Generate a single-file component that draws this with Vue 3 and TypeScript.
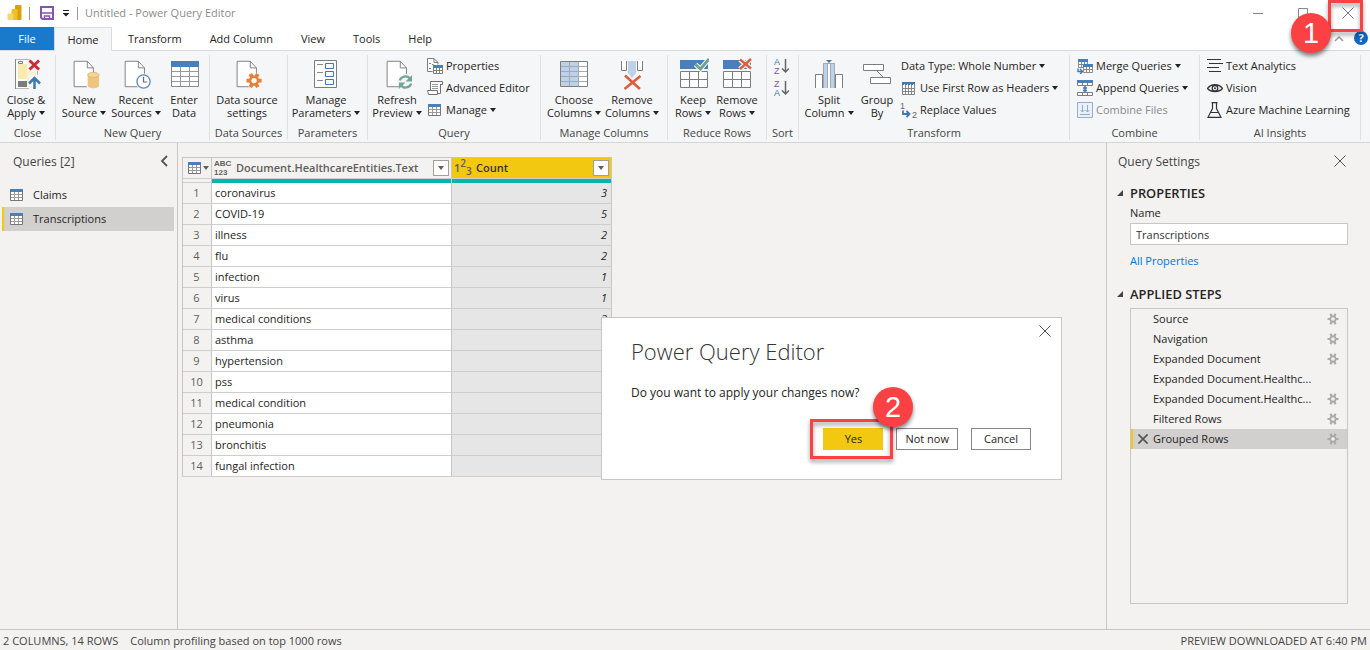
<script setup lang="ts">
import { ref } from 'vue'

interface RibbonButton {
  icon?: string
  label: string
  second?: string
  menu?: boolean
  disabled?: boolean
  action?: string
  letters?: [string, string]
}

interface RibbonGroup {
  name: string
  caption: string
  large: RibbonButton[]
  small: RibbonButton[]
}

const tabs = ['Home', 'Transform', 'Add Column', 'View', 'Tools', 'Help']
const activeTab = ref('Home')

const groups: RibbonGroup[] = [
  {
    name: 'close',
    caption: 'Close',
    large: [{ icon: 'apply', label: 'Close &', second: 'Apply', menu: true }],
    small: [],
  },
  {
    name: 'new-query',
    caption: 'New Query',
    large: [
      { icon: 'new-source', label: 'New', second: 'Source', menu: true },
      { icon: 'recent', label: 'Recent', second: 'Sources', menu: true },
      { icon: 'enter-data', label: 'Enter', second: 'Data' },
    ],
    small: [],
  },
  {
    name: 'sources',
    caption: 'Data Sources',
    large: [{ icon: 'source-settings', label: 'Data source', second: 'settings' }],
    small: [],
  },
  {
    name: 'parameters',
    caption: 'Parameters',
    large: [{ icon: 'parameters', label: 'Manage', second: 'Parameters', menu: true }],
    small: [],
  },
  {
    name: 'query-group',
    caption: 'Query',
    large: [{ icon: 'refresh', label: 'Refresh', second: 'Preview', menu: true }],
    small: [
      { icon: 'properties', label: 'Properties' },
      { icon: 'editor', label: 'Advanced Editor' },
      { icon: 'table', label: 'Manage', menu: true },
    ],
  },
  {
    name: 'columns',
    caption: 'Manage Columns',
    large: [
      { icon: 'choose-columns', label: 'Choose', second: 'Columns', menu: true },
      { icon: 'remove-columns', label: 'Remove', second: 'Columns', menu: true },
    ],
    small: [],
  },
  {
    name: 'rows',
    caption: 'Reduce Rows',
    large: [
      { icon: 'keep-rows', label: 'Keep', second: 'Rows', menu: true },
      { icon: 'remove-rows', label: 'Remove', second: 'Rows', menu: true },
    ],
    small: [],
  },
  {
    name: 'sort',
    caption: 'Sort',
    large: [],
    small: [
      { icon: 'sort-arrow', label: '', action: 'Sort ascending', letters: ['A', 'Z'] },
      { icon: 'sort-arrow', label: '', action: 'Sort descending', letters: ['Z', 'A'] },
    ],
  },
  {
    name: 'transform',
    caption: 'Transform',
    large: [
      { icon: 'split', label: 'Split', second: 'Column', menu: true },
      { icon: 'group', label: 'Group', second: 'By' },
    ],
    small: [
      { label: 'Data Type: Whole Number', menu: true },
      { icon: 'headers', label: 'Use First Row as Headers', menu: true },
      { icon: 'replace', label: 'Replace Values', letters: ['1', '2'] },
    ],
  },
  {
    name: 'combine',
    caption: 'Combine',
    large: [],
    small: [
      { icon: 'merge', label: 'Merge Queries', menu: true },
      { icon: 'append', label: 'Append Queries', menu: true },
      { icon: 'combine', label: 'Combine Files', disabled: true },
    ],
  },
  {
    name: 'insights',
    caption: 'AI Insights',
    large: [],
    small: [
      { icon: 'text', label: 'Text Analytics' },
      { icon: 'vision', label: 'Vision' },
      { icon: 'flask', label: 'Azure Machine Learning' },
    ],
  },
]

const queries = ['Claims', 'Transcriptions']
const selectedQuery = ref('Transcriptions')
const queryName = ref('Transcriptions')

const rows: { text: string; count: number }[] = [
  { text: 'coronavirus', count: 3 },
  { text: 'COVID-19', count: 5 },
  { text: 'illness', count: 2 },
  { text: 'flu', count: 2 },
  { text: 'infection', count: 1 },
  { text: 'virus', count: 1 },
  { text: 'medical conditions', count: 2 },
  { text: 'asthma', count: 1 },
  { text: 'hypertension', count: 1 },
  { text: 'pss', count: 1 },
  { text: 'medical condition', count: 1 },
  { text: 'pneumonia', count: 1 },
  { text: 'bronchitis', count: 1 },
  { text: 'fungal infection', count: 1 },
]

const steps: { label: string; gear: boolean }[] = [
  { label: 'Source', gear: true },
  { label: 'Navigation', gear: true },
  { label: 'Expanded Document', gear: true },
  { label: 'Expanded Document.Healthc...', gear: false },
  { label: 'Expanded Document.Healthc...', gear: true },
  { label: 'Filtered Rows', gear: true },
  { label: 'Grouped Rows', gear: true },
]
const selectedStep = ref(6)
</script>

<template>
  <svg class="sprite" aria-hidden="true">
    <symbol id="doc" viewBox="0 0 32 32">
      <path d="M6.5 2.5H20.5L27 9.5V29.5H6.5Z" fill="#fff" stroke="#7d7d7d" />
      <path d="M20.5 2.5V9.5H27" fill="none" stroke="#7d7d7d" />
    </symbol>
    <symbol id="apply" viewBox="0 0 32 32">
      <path d="M5.5 1.5H27.5V30.5H5.5Z" fill="#fff" stroke="#b9b9b9" />
      <path d="M5.5 1V31" stroke="#8a8a8a" />
      <path d="M8 6H17V21H8Z" fill="#fbeab0" />
      <path d="M17 13L26 13V19L17 28Z" fill="#fcf1cb" />
      <path d="M8.5 3.5H12.5V5.5H8.5Z" fill="#fff" stroke="#7d7d7d" />
      <path d="M8 23H17V29H8Z" fill="#7d7d7d" />
      <circle cx="24" cy="7" r="7" fill="#f5f6f7" />
      <path d="M19.5 2.5L29 11.5M29 2.5L19.5 11.5" stroke="#cf2a33" stroke-width="3" />
      <path d="M19 17H31V32H19Z" fill="#f5f6f7" />
      <path d="M24.5 31V20M19 25.5L24.5 20L30 25.5" fill="none" stroke="#3f78b4" stroke-width="2.5" />
    </symbol>
    <symbol id="new-source" viewBox="0 0 34 32">
      <use href="#doc" width="32" height="32" />
      <path d="M20 15H34V32H20Z" fill="#f5f6f7" />
      <path d="M21 17V28.5C21 32 33 32 33 28.5V17Z" fill="#eec57c" />
      <ellipse cx="27" cy="17" rx="6" ry="2.6" fill="#f3d59e" stroke="#e2b364" />
    </symbol>
    <symbol id="recent" viewBox="0 0 34 32">
      <use href="#doc" x="-1" width="32" height="32" />
      <circle cx="25" cy="24" r="8.5" fill="#f5f6f7" />
      <circle cx="25" cy="24" r="7" fill="#fff" stroke="#5d8cc0" stroke-width="1.4" />
      <path d="M25 19V24.5H29" fill="none" stroke="#666" stroke-width="1.3" />
    </symbol>
    <symbol id="enter-data" viewBox="0 0 32 32">
      <path d="M3.5 3.5H30.5V28.5H3.5Z" fill="#fff" stroke="#8a8a8a" />
      <path d="M12.5 9V28M21.5 9V28M4 13.5H30M4 18.5H30M4 23.5H30" stroke="#9a9a9a" />
      <path d="M3 3H31V9H3Z" fill="#4a80b9" />
    </symbol>
    <symbol id="source-settings" viewBox="0 0 34 32">
      <use href="#doc" width="32" height="32" />
      <circle cx="24.5" cy="23" r="8.5" fill="#f5f6f7" />
      <path d="M16.5 23H32.5M20.5 16L28.5 30M28.5 16L20.5 30" stroke="#e58138" stroke-width="4" />
      <circle cx="24.5" cy="23" r="5.5" fill="#e58138" />
      <circle cx="24.5" cy="23" r="2.8" fill="#fff" />
    </symbol>
    <symbol id="parameters" viewBox="0 0 32 32">
      <path d="M4.5 2.5H26.5V29.5H4.5Z" fill="#fff" stroke="#7d7d7d" />
      <path d="M7 6.5H13M7 14.5H13M7 22.5H13" stroke="#8a8a8a" />
      <path d="M15.5 5.5H23.5V10.5H15.5ZM15.5 13.5H23.5V18.5H15.5ZM15.5 21.5H23.5V26.5H15.5Z" fill="#fff" stroke="#3f78b4" />
    </symbol>
    <symbol id="refresh" viewBox="0 0 34 32">
      <use href="#doc" width="32" height="32" />
      <circle cx="26" cy="24.5" r="8.5" fill="#f5f6f7" />
      <path d="M20 23C21 18.5 28 16.5 31 21.5M32 26C31 30.5 24 32.5 21 27.5" fill="none" stroke="#72a793" stroke-width="2.4" />
      <path d="M33 17V24H26ZM19 32V25H26Z" fill="#72a793" />
    </symbol>
    <symbol id="choose-columns" viewBox="0 0 32 32">
      <path d="M2.5 3.5H29.5V28.5H2.5Z" fill="#fff" />
      <path d="M3 4H21V28H3Z" fill="#bdd1e9" />
      <path d="M11.5 4V28M20.5 4V28M3 8.5H29M3 13.5H29M3 18.5H29M3 23.5H29" stroke="#a3a9b1" />
      <path d="M2.5 3.5H29.5V28.5H2.5Z" fill="none" stroke="#7d7d7d" />
    </symbol>
    <symbol id="remove-columns" viewBox="0 0 32 32">
      <path d="M5.5 3V12.5H10.5V3M21.5 3V12.5H26.5V3" fill="#fff" stroke="#7d7d7d" />
      <path d="M12 3H20V15L16 20L12 15Z" fill="#bdd1e9" />
      <path d="M9 17.5L24 31M24.5 18L8.5 31" stroke="#d8603c" stroke-width="2.6" />
    </symbol>
    <symbol id="row-grid" viewBox="0 0 32 32">
      <path d="M3 2H31V11H3Z" fill="#4a80b9" />
      <path d="M3.5 13.5H30.5V29.5H3.5ZM12.5 14V29M21.5 14V29M4 21.5H30" fill="#fff" stroke="#7d7d7d" />
    </symbol>
    <symbol id="keep-rows" viewBox="0 0 32 32">
      <use href="#row-grid" width="32" height="32" />
      <path d="M18.5 6.5L23.5 11L32 1" fill="none" stroke="#f5f6f7" stroke-width="5" />
      <path d="M18.5 6.5L23.5 11L32 1" fill="none" stroke="#6ba38d" stroke-width="2.8" />
    </symbol>
    <symbol id="remove-rows" viewBox="0 0 32 32">
      <use href="#row-grid" x="-1" width="32" height="32" />
      <path d="M19 1.5L30 10.5M30 1L19 11" stroke="#f5f6f7" stroke-width="5" />
      <path d="M19 1.5L30 10.5M30 1L19 11" stroke="#d8603c" stroke-width="2.4" />
    </symbol>
    <symbol id="split" viewBox="0 0 32 32">
      <path d="M2.5 30V16.5H9.5V30M22.5 30V16.5H29.5V30" fill="#fff" stroke="#7d7d7d" />
      <path d="M10 5H14V30H10ZM18 5H22V30H18Z" fill="#bdd1e9" />
      <path d="M14 5H18V30H14Z" fill="#fff" />
      <path d="M10.5 30V5.5H21.5V30M14.5 6V30M17.5 6V30" fill="none" stroke="#a3a9b1" />
      <path d="M13 2H19L16 5Z" fill="#3f78b4" />
    </symbol>
    <symbol id="group" viewBox="0 0 32 32">
      <path d="M2.5 6.5H22.5V12.5H2.5ZM9.5 19.5H29.5V25.5H9.5Z" fill="#fff" stroke="#7d7d7d" />
      <path d="M16 13L22 19" stroke="#7d7d7d" />
    </symbol>

    <symbol id="table" viewBox="0 0 16 16">
      <path d="M1.5 2.5H13.5V13.5H1.5Z" fill="#fff" stroke="#767676" />
      <path d="M5.5 5V13M9.5 5V13M2 7.5H13M2 10.5H13" stroke="#9a9a9a" />
      <path d="M1 2H14V5H1Z" fill="#4a80b9" />
    </symbol>
    <symbol id="properties" viewBox="0 0 16 16">
      <path d="M0.5 0.5H7L11 4.5V13.5H0.5Z" fill="#fff" stroke="#7d7d7d" />
      <path d="M7 0.5V4.5H11M2 5.5H4M5 6.5H7M2 10.5H4" fill="none" stroke="#7d7d7d" />
      <path d="M6 7H16V16H6Z" fill="#fff" stroke="#f5f6f7" />
      <path d="M6.5 8.5H15.5V15.5H6.5ZM9.5 9V15M12.5 9V15M7 12.5H15" fill="none" stroke="#7d7d7d" />
      <path d="M6 7H16V10H6Z" fill="#4a80b9" />
    </symbol>
    <symbol id="editor" viewBox="0 0 16 16">
      <path d="M3.5 10.5V1.5H13.5V13.5H4" fill="#fff" stroke="#707070" />
      <path d="M12 1.5H15.5V4.5H13M0.5 10.5H10.5V14.5H1.5Z" fill="#fff" stroke="#707070" />
      <path d="M5 4.5H11M5 6.5H11M5 8.5H11" stroke="#9a9a9a" />
    </symbol>
    <symbol id="sort-arrow" viewBox="0 0 16 16">
      <path d="M12.5 1V14M9 10.5L12.5 14L16 10.5" fill="none" stroke="#666" stroke-width="1.5" />
    </symbol>
    <symbol id="headers" viewBox="0 0 16 16">
      <path d="M1.5 2.5H13.5V14.5H1.5ZM4.5 5V14M7.5 5V14M10.5 5V14M2 8.5H13M2 11.5H13" fill="#fff" stroke="#858585" />
      <path d="M1 2H14V5H1Z" fill="#3f78b4" />
      <path d="M3 4.5H4M6 4.5H7M9 4.5H10M12 4.5H13" stroke="#cfe0f2" />
    </symbol>
    <symbol id="replace" viewBox="0 0 16 16">
      <path d="M2 8.5V12H8M5.5 9L8.5 12L5.5 15" fill="none" stroke="#3f78b4" stroke-width="1.8" />
    </symbol>
    <symbol id="merge" viewBox="0 0 16 16">
      <path d="M1.5 2.5H10.5V9.5H1.5ZM4.5 3V9M7.5 3V9M2 6.5H10" fill="#fff" stroke="#8a8a8a" />
      <path d="M1 1H11V4H1Z" fill="#4a80b9" />
      <path d="M6.5 7.5H15.5V14.5H6.5ZM9.5 8V14M12.5 8V14M7 11.5H15" fill="#fff" stroke="#8a8a8a" />
      <path d="M6 6H16V9H6Z" fill="#4a80b9" />
      <path d="M1 10.5V13.5H5M3 11L5.5 13.5L3 16" fill="none" stroke="#3f78b4" stroke-width="1.4" />
    </symbol>
    <symbol id="append" viewBox="0 0 16 16">
      <path d="M0.5 1.5H15.5V5.5H0.5ZM5.5 3V5M10.5 3V5M0.5 12.5H15.5V15.5H0.5ZM5.5 12V15M10.5 12V15" fill="#fff" stroke="#7d7d7d" />
      <path d="M0 0H16V3H0Z" fill="#4a80b9" />
      <path d="M8 6V12M6 8H10M6 10.5H10" stroke="#3f78b4" stroke-width="1.5" />
    </symbol>
    <symbol id="combine" viewBox="0 0 16 16">
      <path d="M0.5 0.5H15.5V15.5H0.5Z" fill="#e9f0f8" stroke="#93aed0" />
      <path d="M3 12.5H13M5.5 3V10M10.5 3V10M3.5 8L5.5 10L7.5 8M8.5 8L10.5 10L12.5 8" fill="none" stroke="#93a9c6" />
    </symbol>
    <symbol id="text" viewBox="0 0 16 16">
      <path d="M0 1.5H14M2 5.5H16M0 9.5H12M2 13.5H14" stroke="#333" />
    </symbol>
    <symbol id="vision" viewBox="0 0 16 16">
      <path d="M0.5 8.5C4 3.5 12 3.5 15.5 8.5C12 12.5 4 12.5 0.5 8.5Z" fill="none" stroke="#333" stroke-width="1.3" />
      <circle cx="8" cy="8.3" r="2.8" fill="none" stroke="#333" stroke-width="1.3" />
      <circle cx="8" cy="8.3" r="1" fill="#333" />
    </symbol>
    <symbol id="flask" viewBox="0 0 16 16">
      <path d="M4.5 0.7H10.5M5.5 1V6.5L1 15.3H14L9.5 6.5V1M4 10.5H11" fill="none" stroke="#333" stroke-width="1.2" />
    </symbol>
    <symbol id="gear" viewBox="0 0 12 12">
      <path d="M0.5 6H11.5M3.5 0.8L8.5 11.200M8.500 0.8L3.5 11.200" stroke="#acaaa8" stroke-width="2.2" />
      <circle cx="6" cy="6" r="3.5" fill="#acaaa8" />
      <circle cx="6" cy="6" r="1.8" fill="#f3f2f1" />
    </symbol>
    <symbol id="cross" viewBox="0 0 12 12">
      <path d="M0.5 0.5L11.5 11.5M11.5 0.5L0.5 11.5" fill="none" stroke="currentColor" />
    </symbol>
  </svg>

  <div class="window">
    <header class="titlebar">
      <svg class="logo" viewBox="0 0 16 18" aria-hidden="true">
        <path d="M8 1.5Q8 1 9 1H13.5Q14.500 1 14.5 2V15Q14.5 16 13.5 16H8Z" fill="#dba106" />
        <path d="M4.5 6Q4.5 5 5.5 5H9.5Q10.5 5 10.5 6V16H4.5Z" fill="#ecc02b" />
        <path d="M0.5 10.5Q0.5 9.5 1.5 9.5H5.5Q6.5 9.5 6.5 10.5V16H1.5Q0.5 16 0.5 15Z" fill="#f6d75f" />
      </svg>
      <span class="bar"></span>
      <button class="plain save" type="button" aria-label="Save">
        <svg viewBox="0 0 14 14">
          <path d="M1 1H13V13H2.5L1 11.5Z" fill="#fff" stroke="#8753ad" stroke-width="2" />
          <path d="M2 7H12M4.5 14V10H9.5V14" fill="none" stroke="#8753ad" stroke-width="1.5" />
        </svg>
      </button>
      <button class="plain quick" type="button" aria-label="Customize quick access toolbar">
        <svg viewBox="0 0 8 8"><path d="M1 1.5H7" stroke="#222" /><path d="M0.5 4H7.5L4 7.5Z" fill="#222" /></svg>
      </button>
      <span class="bar"></span>
      <h1 class="title">Untitled - Power Query Editor</h1>
      <div class="controls">
        <button class="plain control" type="button" aria-label="Minimize">
          <svg viewBox="0 0 12 12"><path d="M1 6.5H11" stroke="#888" /></svg>
        </button>
        <button class="plain control" type="button" aria-label="Maximize">
          <svg viewBox="0 0 12 12"><path d="M1.5 1.5H10.5V10.5H1.5Z" fill="none" stroke="#888" /></svg>
        </button>
        <button class="plain control" type="button" aria-label="Close">
          <svg viewBox="0 0 12 12"><use href="#cross" /></svg>
        </button>
      </div>
    </header>

    <nav class="tabs">
      <button class="tab file" type="button">File</button>
      <button
        v-for="tab in tabs"
        :key="tab"
        class="tab"
        :class="{ active: tab === activeTab }"
        type="button"
        @click="activeTab = tab"
      >{{ tab }}</button>
      <div class="tab-tools">
        <button class="plain" type="button" aria-label="Collapse ribbon">
          <svg class="caret-up" viewBox="0 0 10 6"><path d="M1 5L5 1L9 5" fill="none" stroke="#999" stroke-width="1.5" /></svg>
        </button>
        <button class="plain help" type="button" aria-label="Help">?</button>
      </div>
    </nav>

    <section class="ribbon">
      <div v-for="group in groups" :key="group.name" class="group" :class="group.name">
        <div class="group-body">
          <button v-for="item in group.large" :key="item.icon" class="large" :class="item.icon" type="button">
            <svg class="icon32" aria-hidden="true"><use :href="'#' + item.icon" /></svg>
            <span>{{ item.label }}</span>
            <span>{{ item.second }}<i v-if="item.menu" class="arrow"></i></span>
          </button>
          <div v-if="group.small.length" class="stack">
            <button
              v-for="(item, i) in group.small"
              :key="i"
              class="small"
              type="button"
              :disabled="item.disabled"
              :aria-label="item.action || item.label"
            >
              <svg v-if="item.icon" class="icon16" aria-hidden="true">
                <use :href="'#' + item.icon" />
                <template v-if="item.letters">
                  <text :x="item.icon === 'replace' ? -1 : 1" y="7" class="letter" :class="'letter-' + item.letters[0]">{{ item.letters[0] }}</text>
                  <text :x="item.icon === 'replace' ? 11 : 1" y="16" class="letter" :class="'letter-' + item.letters[1]">{{ item.letters[1] }}</text>
                </template>
              </svg>
              <span v-if="item.label">{{ item.label }}<i v-if="item.menu" class="arrow"></i></span>
            </button>
          </div>
        </div>
        <div class="caption">{{ group.caption }}</div>
      </div>
    </section>

    <main class="workspace">
      <aside class="queries">
        <header class="pane-head">
          <h2>Queries [2]</h2>
          <button class="plain" type="button" aria-label="Collapse queries">
            <svg class="chevron" viewBox="0 0 8 12"><path d="M7 1L2 6L7 11" fill="none" stroke="#555" stroke-width="1.8" /></svg>
          </button>
        </header>
        <button
          v-for="query in queries"
          :key="query"
          class="query"
          :class="{ selected: query === selectedQuery }"
          type="button"
          @click="selectedQuery = query"
        >
          <svg class="icon16" aria-hidden="true"><use href="#table" /></svg>{{ query }}
        </button>
      </aside>

      <section class="preview">
        <table class="grid">
          <thead>
            <tr class="head">
              <th class="index">
                <div class="head-cell corner">
                  <svg class="icon16" aria-hidden="true"><use href="#table" /></svg><i class="arrow gray"></i>
                </div>
              </th>
              <th class="text-col">
                <div class="head-cell">
                  <span class="any"><b>ABC</b><b>123</b></span>
                  <span class="name">Document.HealthcareEntities.Text</span>
                  <button class="filter" type="button" aria-label="Filter text"><i class="arrow gray"></i></button>
                </div>
              </th>
              <th class="count-col">
                <div class="head-cell">
                  <span class="number">1<sup>2</sup><sub>3</sub></span>
                  <span class="name">Count</span>
                  <button class="filter" type="button" aria-label="Filter count"><i class="arrow gray"></i></button>
                </div>
              </th>
            </tr>
            <tr class="quality"><td></td><td></td><td></td></tr>
          </thead>
          <tbody>
            <tr v-for="(row, i) in rows" :key="row.text">
              <td class="index">{{ i + 1 }}</td>
              <td>{{ row.text }}</td>
              <td class="count">{{ row.count }}</td>
            </tr>
          </tbody>
        </table>
      </section>

      <aside class="settings">
        <header class="pane-head">
          <h2>Query Settings</h2>
          <button class="plain" type="button" aria-label="Close query settings">
            <svg class="cross" viewBox="0 0 12 12"><use href="#cross" /></svg>
          </button>
        </header>
        <h3><i class="fold"></i>PROPERTIES</h3>
        <label for="query-name">Name</label>
        <input id="query-name" v-model="queryName" type="text" />
        <a href="#properties-dialog">All Properties</a>
        <h3 class="applied"><i class="fold"></i>APPLIED STEPS</h3>
        <ol class="steps">
          <li
            v-for="(step, i) in steps"
            :key="i"
            :class="{ selected: i === selectedStep }"
            @click="selectedStep = i"
          >
            <button class="plain remove" type="button" aria-label="Remove step">
              <svg v-if="i === selectedStep" class="cross" viewBox="0 0 12 12"><use href="#cross" /></svg>
            </button>
            <span>{{ step.label }}</span>
            <button v-if="step.gear" class="plain" type="button" aria-label="Edit step">
              <svg class="gear"><use href="#gear" /></svg>
            </button>
          </li>
        </ol>
      </aside>
    </main>

    <footer class="status">
      <span>2 COLUMNS, 14 ROWS</span>
      <span>Column profiling based on top 1000 rows</span>
      <span class="downloaded">PREVIEW DOWNLOADED AT 6:40 PM</span>
    </footer>

    <div class="dialog" role="dialog" aria-labelledby="dialog-title">
      <button class="plain dismiss" type="button" aria-label="Close dialog">
        <svg class="cross" viewBox="0 0 12 12"><use href="#cross" /></svg>
      </button>
      <h2 id="dialog-title">Power Query Editor</h2>
      <p>Do you want to apply your changes now?</p>
      <div class="actions">
        <button class="primary" type="button">Yes</button>
        <button type="button">Not now</button>
        <button type="button">Cancel</button>
      </div>
      <div class="mark mark-yes"></div>
      <div class="badge badge-yes">2</div>
    </div>

    <div class="mark mark-close"></div>
    <div class="badge badge-close">1</div>
  </div>
</template>

<style>
html,
body,
#app {
  height: 100%;
}
body {
  margin: 0;
}
</style>

<style scoped>
.sprite {
  display: none;
}
.window {
  position: relative;
  display: flex;
  flex-direction: column;
  min-height: 100%;
  overflow: hidden;
  background: #f3f2f1;
  color: #252423;
  font: 11px/14px "Open Sans", "Noto Sans", sans-serif;
}
.window *,
.window {
  box-sizing: border-box;
}
button {
  padding: 0;
  border: 0;
  background: none;
  color: inherit;
  font: inherit;
}
svg {
  display: block;
  flex: none;
  overflow: visible;
}
h1,
h2,
h3,
p,
ol {
  margin: 0;
  padding: 0;
  font-weight: 400;
}
.plain {
  display: flex;
  align-items: center;
  justify-content: center;
}
.arrow {
  display: inline-block;
  margin-left: 3px;
  border: 3px solid transparent;
  border-top: 4px solid #222;
  border-bottom: 0;
  vertical-align: 2px;
}
.arrow.gray {
  margin: 0;
  border-top-color: #605e5c;
}
.letter {
  fill: #666;
  font-family: "Liberation Sans", Arial, sans-serif;
  font-size: 9px;
}
.letter-A {
  fill: #3f78b4;
}
.letter-Z {
  fill: #8753ad;
}

.titlebar {
  display: flex;
  align-items: center;
  height: 26px;
  padding-left: 7px;
  background: #fff;
}
.logo {
  width: 16px;
  height: 18px;
  margin-right: 6px;
}
.bar {
  width: 1px;
  height: 13px;
  background: #999;
}
.save {
  margin: 0 8px 0 10px;
}
.save svg {
  width: 14px;
  height: 14px;
}
.quick {
  margin-right: 7px;
}
.quick svg {
  width: 8px;
  height: 8px;
}
.title {
  padding-left: 7px;
  color: #8c8c8c;
  font-size: 11px;
  line-height: 24px;
}
.controls {
  display: flex;
  margin-left: auto;
}
.control {
  width: 45px;
  height: 22px;
  color: #777;
}
.control svg {
  width: 12px;
  height: 12px;
}

.tabs {
  display: flex;
  height: 25px;
  padding-top: 1px;
  border-bottom: 1px solid #dadbdc;
  background: #fff;
}
.tab {
  padding: 0 14px;
}
.tab.file {
  width: 54px;
  background: #1979ca;
  color: #fff;
}
.tab.active {
  width: 58px;
  height: 25px;
  margin-right: 2px;
  padding: 0;
  border: 1px solid #dadbdc;
  border-bottom: 0;
  background: #f5f6f7;
}
.tab-tools {
  display: flex;
  gap: 10px;
  margin-left: auto;
  padding-right: 2px;
}
.caret-up {
  width: 10px;
  height: 6px;
}
.help {
  width: 14px;
  height: 14px;
  margin-top: 4px;
  border-radius: 50%;
  background: #1267c4;
  color: #fff;
  font-weight: 700;
}

.ribbon {
  display: flex;
  height: 92px;
  padding: 4px 0 2px;
  border-bottom: 1px solid #d5d5d5;
  background: #f5f6f7;
}
.group {
  display: flex;
  flex: none;
  flex-direction: column;
  border-right: 1px solid #e0e1e2;
}
.group-body {
  display: flex;
  flex: 1;
}
.caption {
  color: #444;
  line-height: 14px;
  text-align: center;
}
.large {
  display: flex;
  flex: none;
  flex-direction: column;
  align-items: center;
  width: 52px;
  padding-top: 3px;
  line-height: 13px;
  white-space: nowrap;
}
.icon32 {
  width: 32px;
  height: 32px;
  margin-bottom: 3px;
}
.icon16 {
  width: 16px;
  height: 16px;
}
.stack {
  display: flex;
  flex-direction: column;
}
.small {
  display: flex;
  align-items: center;
  gap: 3px;
  height: 22px;
  white-space: nowrap;
}
.small:disabled {
  color: #8a8a8a;
}
.close {
  width: 56px;
}
.new-query {
  width: 154px;
}
.new-query .group-body {
  padding-left: 2px;
}
.new-query .enter-data {
  width: 44px;
}
.sources {
  width: 78px;
}
.sources .large {
  width: 74px;
}
.group.parameters {
  width: 80px;
}
.parameters .large {
  width: 76px;
}
.query-group {
  width: 173px;
}
.query-group .group-body {
  gap: 4px;
  padding-left: 3px;
}
.columns {
  width: 127px;
}
.columns .group-body {
  padding-left: 4px;
}
.columns .large {
  width: 58px;
}
.rows {
  width: 99px;
}
.rows .group-body {
  padding-left: 3px;
}
.rows .large {
  width: 44px;
}
.sort {
  width: 32px;
}
.sort .group-body {
  padding-left: 6px;
}
.transform {
  width: 271px;
}
.transform .group-body {
  padding-left: 4px;
}
.transform .group {
  width: 44px;
  border: 0;
}
.transform .stack {
  padding-left: 2px;
}
.group.combine {
  width: 130px;
}
.insights {
  width: 161px;
}
.combine .group-body,
.insights .group-body {
  padding-left: 7px;
}

.workspace {
  display: flex;
  flex: 1;
}
.pane-head {
  display: flex;
  align-items: center;
  justify-content: space-between;
  height: 36px;
}
.pane-head h2 {
  padding-top: 2px;
  color: #444;
  font-size: 12px;
}
.queries {
  width: 178px;
  border-right: 1px solid #c8c6c4;
}
.queries .pane-head {
  margin-bottom: 4px;
  padding: 0 9px 0 13px;
}
.chevron {
  width: 8px;
  height: 12px;
}
.query {
  display: flex;
  align-items: center;
  gap: 8px;
  width: 172px;
  height: 24px;
  margin-left: 2px;
  padding-left: 5px;
  border-left: 2px solid transparent;
}
.query.selected {
  border-color: #f2c811;
  background: #d2d0ce;
}
.preview {
  flex: 1;
  padding: 14px 4px;
}
.grid {
  width: 430px;
  border-top: 1px solid #c8c6c4;
  border-left: 1px solid #c8c6c4;
  border-spacing: 0;
  table-layout: fixed;
}
.grid th,
.grid td {
  height: 21px;
  padding: 0;
  border-right: 1px solid #c8c6c4;
  border-bottom: 1px solid #d0cecc;
  line-height: 20px;
}
.grid th.index {
  width: 29px;
}
.grid th.count-col {
  width: 160px;
  background: #f2c811;
}
.grid tbody td {
  padding: 0 4px 0 3px;
  background: #fff;
}
.grid tbody td.index {
  background: #f3f2f1;
  color: #605e5c;
  text-align: center;
}
.grid tbody td.count {
  background: #e6e6e6;
  font-style: italic;
  text-align: right;
}
.grid .quality td {
  height: 4px;
  border-bottom: 0;
  background: #01b8aa;
}
.grid .quality td:first-child {
  border-bottom: 1px solid #d0cecc;
  background: #f3f2f1;
}
.head-cell {
  display: flex;
  align-items: center;
  height: 20px;
  padding: 0 2px;
  color: #605e5c;
  text-align: left;
}
.corner {
  padding-left: 4px;
}
.any {
  display: flex;
  flex-direction: column;
  width: 22px;
}
.any b {
  font: 700 8px/9px "Liberation Sans", Arial, sans-serif;
}
.number {
  width: 22px;
  font-weight: 600;
  line-height: 12px;
  white-space: nowrap;
}
.number sup,
.number sub {
  font-size: 10px;
  line-height: 0;
}
.name {
  flex: 1;
  font-weight: 600;
}
.count-col .name {
  color: #333;
}
.filter {
  display: flex;
  align-items: center;
  justify-content: center;
  width: 16px;
  height: 16px;
  border: 1px solid #a19f9d;
  background: #fff;
}

.settings {
  display: flex;
  flex-direction: column;
  width: 264px;
  padding: 0 22px 25px 23px;
  border-left: 1px solid #c8c6c4;
}
.settings .pane-head {
  margin: 0 2px 6px -12px;
}
.cross {
  width: 12px;
  height: 12px;
  color: #555;
}
.settings h3 {
  display: flex;
  align-items: center;
  height: 16px;
  margin-left: -13px;
  font-weight: 600;
}
.fold {
  width: 6px;
  height: 6px;
  margin-right: 7px;
  background: #444;
  clip-path: polygon(100% 0, 100% 100%, 0 100%);
}
.settings label {
  margin-top: 5px;
}
.settings input {
  width: 100%;
  height: 22px;
  margin-top: 3px;
  padding: 0 5px;
  border: 1px solid #c8c6c4;
  background: #fff;
  color: #333;
  font: inherit;
}
.settings a {
  align-self: flex-start;
  margin-top: 9px;
  color: #0078d4;
  text-decoration: none;
}
.settings h3.applied {
  margin-top: 18px;
}
.steps {
  flex: 1;
  margin-top: 6px;
  border: 1px solid #c8c6c4;
  list-style: none;
}
.steps li {
  display: flex;
  align-items: center;
  height: 20px;
  padding-right: 8px;
  border-left: 2px solid transparent;
}
.steps li.selected {
  border-color: #f2c811;
  background: #d2d0ce;
}
.steps .remove {
  width: 20px;
}
.steps .cross {
  width: 10px;
  height: 10px;
  stroke-width: 2px;
}
.steps span {
  flex: 1;
  white-space: nowrap;
}
.gear {
  width: 12px;
  height: 12px;
}

.status {
  display: flex;
  align-items: center;
  gap: 12px;
  height: 21px;
  padding: 2px 3px 0;
  border-top: 1px solid #c8c6c4;
  color: #444;
}
.downloaded {
  margin-left: auto;
}

.dialog {
  position: absolute;
  top: 317px;
  right: 308px;
  width: 461px;
  padding: 17px 30px 29px 29px;
  border: 1px solid #c8c6c4;
  background: #fff;
}
.dismiss {
  position: absolute;
  top: 7px;
  right: 10px;
}
.dialog h2 {
  color: #333;
  font-size: 22px;
  font-weight: 300;
  line-height: 32px;
}
.dialog p {
  margin-top: 18px;
  font-size: 12px;
  line-height: 16px;
}
.actions {
  display: flex;
  justify-content: flex-end;
  gap: 13px;
  margin-top: 27px;
}
.actions button {
  min-width: 60px;
  height: 22px;
  padding: 0 8px;
  border: 1px solid #8a8886;
}
.actions .primary {
  border-color: #f2c811;
  background: #f2c811;
}
.mark,
.badge {
  position: absolute;
  pointer-events: none;
}
.mark {
  border: 3px solid #fb4143;
  filter: drop-shadow(0 3px 2px rgba(0, 0, 0, 0.4));
}
.mark-close {
  top: 0;
  right: 7px;
  width: 35px;
  height: 32px;
}
.mark-yes {
  top: 101px;
  left: 208px;
  width: 83px;
  height: 40px;
}
.badge {
  width: 40px;
  height: 40px;
  border-radius: 50%;
  background: #fb4143;
  box-shadow: 0 3px 4px rgba(0, 0, 0, 0.5);
  color: #fff;
  font: 29px/40px "Liberation Sans", Arial, sans-serif;
  text-align: center;
}
.badge-close {
  top: 13px;
  right: 39px;
}
.badge-yes {
  top: 69px;
  left: 271px;
}
</style>
